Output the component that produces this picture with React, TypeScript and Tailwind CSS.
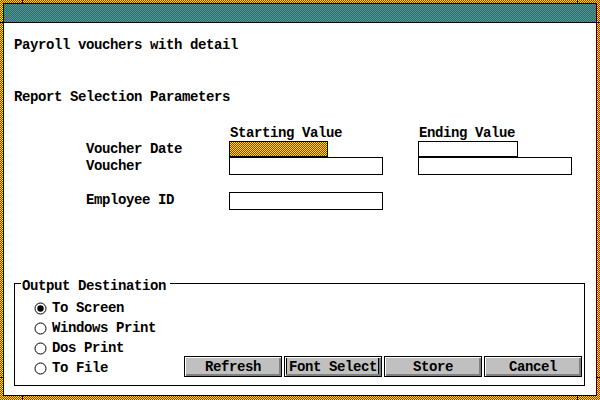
import React from "react";

function Radio({ checked, label }: { checked?: boolean; label: string }) {
  return (
    <div className="flex h-4 items-center gap-[5px]">
      <svg width="13" height="13" viewBox="0 0 13 13" className="shrink-0">
        <circle cx="6.5" cy="6.5" r="5.5" fill="#ffffff" stroke="#000000" strokeWidth="1" />
        {checked && <circle cx="6.5" cy="6.5" r="3.2" fill="#000000" />}
      </svg>
      <span>{label}</span>
    </div>
  );
}

function Btn({ label, focused }: { label: string; focused?: boolean }) {
  return (
    <div
      className={
        focused
          ? "flex h-[21px] w-[98px] items-center justify-center border border-black bg-[#c0c0c0] shadow-[inset_1px_1px_0_#ffffff,inset_-2px_-2px_0_#808080,inset_2px_0_0_#000000,inset_-3px_0_0_#000000]"
          : "flex h-[21px] w-[98px] items-center justify-center border border-black bg-[#c0c0c0] shadow-[inset_1px_1px_0_#ffffff,inset_-2px_-2px_0_#808080]"
      }
    >
      <span className="pt-[1px]">{label}</span>
    </div>
  );
}

export default function App() {
  return (
    <div className="relative h-[400px] w-[600px] bg-[image:repeating-linear-gradient(90deg,#000000_0px_1px,#00ff00_1px_2px),repeating-linear-gradient(0deg,#ff0000_0px_1px,#ffff00_1px_2px)] bg-blend-difference px-[3px] pb-[4px] pt-[3px] font-['Liberation_Mono',monospace] text-[14px] font-bold leading-4 tracking-[-0.4px] text-black">
      {/* resize ticks */}
      <div className="absolute left-[22px] top-0 h-[3px] w-px bg-black" />
      <div className="absolute left-[577px] top-0 h-[3px] w-px bg-black" />
      <div className="absolute bottom-0 left-[22px] h-[4px] w-px bg-black" />
      <div className="absolute bottom-0 left-[577px] h-[4px] w-px bg-black" />
      <div className="absolute left-0 top-[22px] h-px w-[3px] bg-black" />
      <div className="absolute right-0 top-[22px] h-px w-[3px] bg-black" />
      <div className="absolute left-0 top-[377px] h-px w-[3px] bg-black" />
      <div className="absolute right-0 top-[377px] h-px w-[3px] bg-black" />

      <div className="flex h-full flex-col border border-black bg-white">
        <div className="h-[19px] shrink-0 border-b border-black bg-[image:repeating-linear-gradient(90deg,#000000_0px_1px,#800000_1px_2px),repeating-linear-gradient(0deg,#008080_0px_1px,#808080_1px_2px)] bg-blend-difference" />

        <div className="flex flex-col pl-[10px]">
          <div className="mt-[14px]">Payroll vouchers with detail</div>
          <div className="mt-[36px]">Report Selection Parameters</div>

          <div className="ml-[72px] mt-[20px] grid grid-cols-[108px_154px_154px] grid-rows-[16px_16px_18px_17px_18px] gap-x-[35px]">
            <div />
            <div className="pl-[1px]">Starting Value</div>
            <div className="pl-[1px]">Ending Value</div>

            <div>Voucher Date</div>
            <div className="h-[16px] w-[99px] border border-black bg-[image:repeating-linear-gradient(90deg,#000000_0px_1px,#00ff00_1px_2px),repeating-linear-gradient(0deg,#ff0000_0px_1px,#ffff00_1px_2px)] bg-blend-difference" />
            <div className="h-[16px] w-[100px] border border-black bg-white" />

            <div className="pt-[1px]">Voucher</div>
            <div className="h-[18px] w-[154px] border border-black bg-white" />
            <div className="h-[18px] w-[154px] border border-black bg-white" />

            <div />
            <div />
            <div />

            <div>Employee ID</div>
            <div className="h-[18px] w-[154px] border border-black bg-white" />
            <div />
          </div>

          <div className="relative mt-[73px] flex h-[103px] w-[571px] justify-between border border-black">
            <div className="absolute left-[6px] top-[-6px] bg-white pl-[1px] pr-[4px]">Output Destination</div>
            <div className="flex flex-col gap-[4px] pl-[19px] pt-[16px]">
              <Radio checked label="To Screen" />
              <Radio label="Windows Print" />
              <Radio label="Dos Print" />
              <Radio label="To File" />
            </div>
            <div className="mb-[8px] mr-[2px] flex gap-[2px] self-end">
              <Btn label="Refresh" />
              <Btn label="Font Select" focused />
              <Btn label="Store" />
              <Btn label="Cancel" />
            </div>
          </div>
        </div>
      </div>
    </div>
  );
}
